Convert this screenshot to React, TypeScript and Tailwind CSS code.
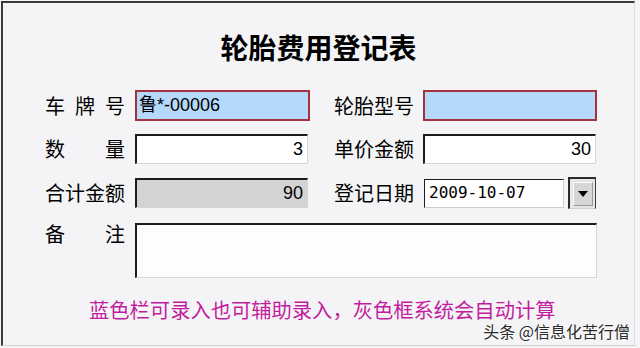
import React from 'react'

const cjk = "font-['Noto_Sans_CJK_SC',sans-serif]"
const field = "font-['Liberation_Sans','Noto_Sans_CJK_SC',sans-serif] text-[18px] text-black"

function Label({ chars, top }: { chars: string[]; top?: boolean }) {
  return (
    <div className={`flex w-[80px] justify-between text-[20px] leading-[24px] text-black ${cjk} ${top ? 'mt-[-1px]' : ''}`}>
      {chars.map((c, i) => (
        <span key={i}>{c}</span>
      ))}
    </div>
  )
}

function BlueInput({ value, w }: { value?: string; w: string }) {
  return (
    <div className={`${w} flex h-[31px] items-center border-2 border-[#a8323c] bg-[#b5d9fb] pl-[2px] ${field}`}>
      {value}
    </div>
  )
}

function SunkenInput({ value, w, gray }: { value?: string; w: string; gray?: boolean }) {
  return (
    <div
      className={`${w} flex h-[30px] items-center justify-end border-t-2 border-l-2 border-r border-b border-t-[#1c1c1c] border-l-[#1c1c1c] border-r-[#d6d6d6] border-b-[#d6d6d6] pr-[4px] ${gray ? 'bg-[#d3d3d5]' : 'bg-white'} ${field}`}
    >
      {value}
    </div>
  )
}

export default function App() {
  return (
    <div className="relative h-[348px] w-[640px] overflow-hidden bg-[#f4f4f6] p-px">
      <div className="h-[345px] w-[634px] border-t-2 border-l-2 border-r border-b border-t-[#3a3a3a] border-l-[#3a3a3a] border-r-[#dcdcdc] border-b-[#d0d0d0]">
        {/* Title */}
        <h1 className={`mt-[28px] text-center text-[28px] font-bold leading-[32px] text-black ${cjk}`}>
          轮胎费用登记表
        </h1>

        <div className="mt-[27px] flex flex-col pl-[42px]">
          {/* Row 1 */}
          <div className="flex items-center">
            <Label chars={['车', '牌', '号']} />
            <div className="ml-[10px]">
              <BlueInput value="鲁*-00006" w="w-[175px]" />
            </div>
            <div className="ml-[24px]">
              <Label chars={['轮', '胎', '型', '号']} />
            </div>
            <div className="ml-[9px]">
              <BlueInput w="w-[174px]" />
            </div>
          </div>

          {/* Row 2 */}
          <div className="mt-[13px] flex items-center">
            <Label chars={['数', '量']} />
            <div className="ml-[10px]">
              <SunkenInput value="3" w="w-[173px]" />
            </div>
            <div className="ml-[26px]">
              <Label chars={['单', '价', '金', '额']} />
            </div>
            <div className="ml-[9px]">
              <SunkenInput value="30" w="w-[173px]" />
            </div>
          </div>

          {/* Row 3 */}
          <div className="mt-[13px] flex items-center">
            <Label chars={['合', '计', '金', '额']} />
            <div className="ml-[10px]">
              <SunkenInput value="90" w="w-[173px]" gray />
            </div>
            <div className="ml-[26px]">
              <Label chars={['登', '记', '日', '期']} />
            </div>
            <div className="ml-[10px] flex items-center gap-[4px]">
              <div className="flex h-[29px] w-[140px] items-center border-t border-l border-r border-b border-t-[#1c1c1c] border-l-[#1c1c1c] border-r-[#cfcfcf] border-b-[#cfcfcf] bg-white pl-[4px] font-['DejaVu_Sans_Mono',monospace] text-[16px] text-black">
                2009-10-07
              </div>
              <div className="flex h-[32px] w-[28px] items-center justify-center border-t-2 border-l-2 border-r border-b border-t-[#2a2a2a] border-l-[#2a2a2a] border-r-[#3a3a3a] border-b-[#cfcfcf] bg-[#e6e6e6]">
                <div className="flex h-[24px] w-[20px] items-center justify-center border border-[#f8f8f8] border-r-[#9a9a9a] border-b-[#9a9a9a] bg-[#d6d6d8]">
                  <svg width="10" height="6" viewBox="0 0 10 6">
                    <path d="M0 0H10L5 6Z" fill="#000" />
                  </svg>
                </div>
              </div>
            </div>
          </div>

          {/* Row 4 */}
          <div className="mt-[14px] flex items-start">
            <Label chars={['备', '注']} top />
            <div className="ml-[10px] h-[55px] w-[462px] border-t-2 border-l-2 border-r border-b border-t-[#1c1c1c] border-l-[#1c1c1c] border-r-[#d6d6d6] border-b-[#d6d6d6] bg-[#fdfdfd]" />
          </div>
        </div>

        {/* Note */}
        <p className={`ml-[86px] mt-[21px] w-fit text-[20.3px] leading-[20px] text-[#c21d9e] ${cjk}`}>
          蓝色栏可录入也可辅助录入，灰色框系统会自动计算
        </p>
      </div>

      {/* Watermark */}
      <div className={`absolute right-[10px] bottom-[9px] text-[16px] leading-[16px] text-[#2a2a2a] [text-shadow:0_0_2px_#fff,0_0_2px_#fff] ${cjk}`}>
        头条 @信息化苦行僧
      </div>
    </div>
  )
}
